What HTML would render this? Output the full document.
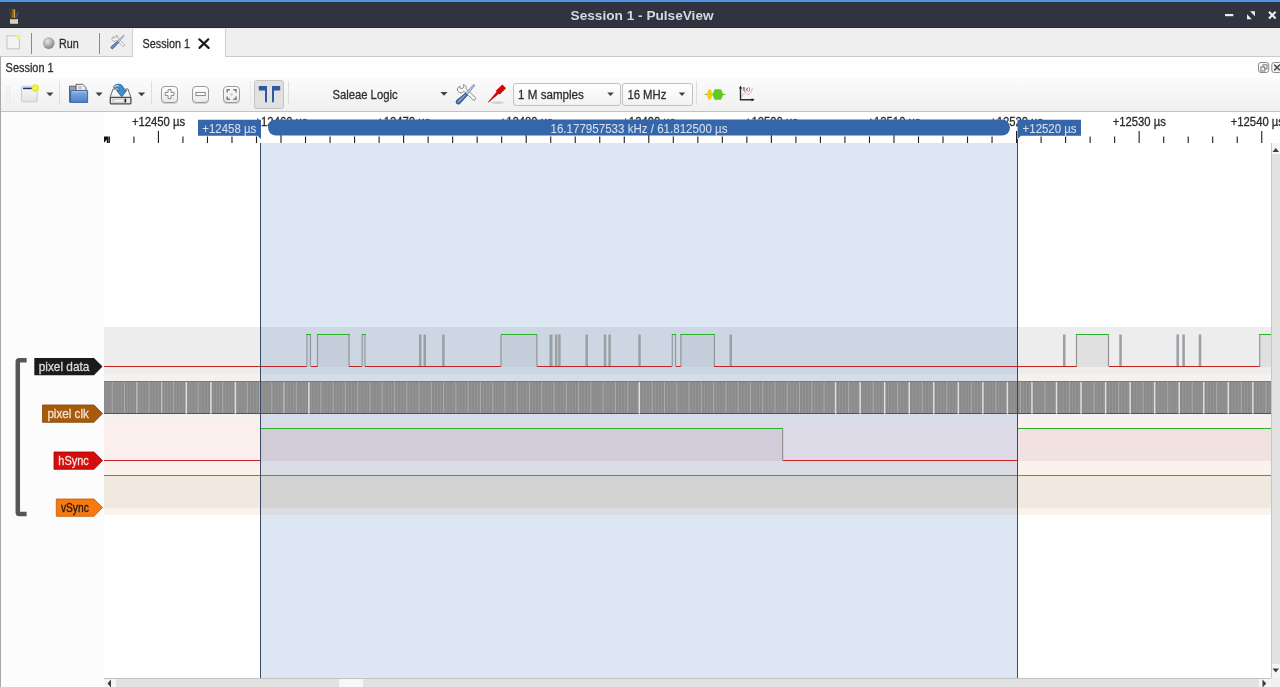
<!DOCTYPE html>
<html><head><meta charset="utf-8"><title>Session 1 - PulseView</title>
<style>
html,body{margin:0;padding:0;}
body{width:1280px;height:687px;overflow:hidden;background:#fff;position:relative;font-family:"Liberation Sans","DejaVu Sans",sans-serif;font-size:12.5px;color:#2e2e2e;}
.abs{position:absolute;}
#topline{left:0;top:0;width:1280px;height:2px;background:#4f93e3;}
#titlebar{left:0;top:2px;width:1280px;height:26px;background:#2f343f;border-bottom:1px solid #262a33;box-sizing:border-box;}
#maintb{left:0;top:28px;width:1280px;height:29px;background:#efefef;border-bottom:1px solid #c9c9c9;box-sizing:border-box;}
#tab{left:132px;top:28px;width:94px;height:30px;background:#fefefe;border:1px solid #cfcfcf;border-top-color:#ececec;border-bottom:none;box-sizing:border-box;border-radius:2px 2px 0 0;}
#dock{left:0;top:57px;width:1280px;height:21px;background:#fefefe;}
#toolbar{left:0;top:78px;width:1280px;height:34px;background:linear-gradient(#fbfbfb,#f0f0f0);border-bottom:1px solid #c2c2c2;box-sizing:border-box;}
#leftedge{left:0;top:57px;width:1px;height:630px;background:#a9a9a9;}
#hdr{left:1px;top:112px;width:103px;height:575px;background:#fcfcfc;}
.sep{position:absolute;width:1px;background:#dedede;}
.combo{position:absolute;box-sizing:border-box;border:1px solid #c2c2c2;border-radius:3px;background:linear-gradient(#ffffff,#f2f2f2);}
.zbtn{position:absolute;box-sizing:border-box;border:1px solid #9a9a9a;border-radius:4px;background:linear-gradient(#ffffff,#e9e9e9);box-shadow:0 1px 0 #d0d0d0;}
svg{position:absolute;left:0;top:0;overflow:visible;}
svg text{font-family:"Liberation Sans","DejaVu Sans",sans-serif;white-space:pre;}
svg{will-change:transform;}
</style></head><body>
<div class="abs" id="topline"></div>
<div class="abs" id="titlebar"></div>
<div class="abs" id="maintb"></div>
<div class="abs" id="tab"></div>
<div class="abs" id="dock"></div>
<div class="abs" id="toolbar"></div>
<div class="abs" id="hdr"></div>

<div class="combo" style="left:513px;top:83px;width:108px;height:23px;"></div>
<div class="combo" style="left:622px;top:83px;width:71px;height:23px;"></div>
<div class="sep" style="left:31px;top:33px;height:21px;background:#8a8a8a;"></div>
<div class="sep" style="left:99px;top:33px;height:21px;background:#8a8a8a;"></div>
<div class="sep" style="left:59px;top:81px;height:24px;"></div>
<div class="sep" style="left:151px;top:81px;height:24px;"></div>
<div class="sep" style="left:250px;top:81px;height:24px;background:#e8e8e8;"></div>
<div class="sep" style="left:288px;top:81px;height:24px;"></div>
<div class="sep" style="left:696px;top:81px;height:24px;"></div>

<div class="abs" style="left:254px;top:80px;width:30px;height:29px;box-sizing:border-box;border:1px solid #c4c4c4;border-radius:3px;background:#e1e1e1;"></div>
<div class="zbtn" style="left:161px;top:86px;width:17px;height:17px;"></div>
<div class="zbtn" style="left:192px;top:86px;width:17px;height:17px;"></div>
<div class="zbtn" style="left:223px;top:86px;width:17px;height:17px;"></div>

<svg width="1280" height="687" viewBox="0 0 1280 687">
<g shape-rendering="crispEdges">
<rect x="260.00" y="143.00" width="758.00" height="535.00" fill="#dce7f3" />
<rect x="104.00" y="327.00" width="156.00" height="47.00" fill="#ededed" />
<rect x="260.00" y="327.00" width="758.00" height="47.00" fill="#ccd7e3" />
<rect x="1018.00" y="327.00" width="253.00" height="47.00" fill="#ededed" />
<rect x="104.00" y="374.00" width="156.00" height="47.00" fill="#f5f1ee" />
<rect x="260.00" y="374.00" width="758.00" height="47.00" fill="#d5dde8" />
<rect x="1018.00" y="374.00" width="253.00" height="47.00" fill="#f5f1ee" />
<rect x="104.00" y="421.00" width="156.00" height="47.00" fill="#fcf0ee" />
<rect x="260.00" y="421.00" width="758.00" height="47.00" fill="#dddae7" />
<rect x="1018.00" y="421.00" width="253.00" height="47.00" fill="#fcf0ee" />
<rect x="104.00" y="468.00" width="156.00" height="47.00" fill="#faf3ec" />
<rect x="260.00" y="468.00" width="758.00" height="47.00" fill="#dadee3" />
<rect x="1018.00" y="468.00" width="253.00" height="47.00" fill="#faf3ec" />
<line x1="104.00" y1="366.50" x2="306.90" y2="366.50" stroke="#c22323" stroke-width="1"/>
<rect x="306.90" y="334.50" width="3.60" height="32.00" fill="#c5cfdb" />
<rect x="306.30" y="334.50" width="1.20" height="32.00" fill="#979ba1" shape-rendering="auto"/>
<rect x="309.90" y="334.50" width="1.20" height="32.00" fill="#979ba1" shape-rendering="auto"/>
<line x1="306.40" y1="334.50" x2="311.00" y2="334.50" stroke="#2bb02b" stroke-width="1"/>
<line x1="310.50" y1="366.50" x2="317.50" y2="366.50" stroke="#c22323" stroke-width="1"/>
<rect x="317.50" y="334.50" width="31.50" height="32.00" fill="#c5cfdb" />
<rect x="316.90" y="334.50" width="1.20" height="32.00" fill="#949494" shape-rendering="auto"/>
<rect x="348.40" y="334.50" width="1.20" height="32.00" fill="#949494" shape-rendering="auto"/>
<line x1="317.00" y1="334.50" x2="349.50" y2="334.50" stroke="#2bb02b" stroke-width="1"/>
<line x1="349.00" y1="366.50" x2="362.10" y2="366.50" stroke="#c22323" stroke-width="1"/>
<rect x="362.10" y="334.50" width="2.90" height="32.00" fill="#c5cfdb" />
<rect x="361.50" y="334.50" width="1.20" height="32.00" fill="#979ba1" shape-rendering="auto"/>
<rect x="364.40" y="334.50" width="1.20" height="32.00" fill="#979ba1" shape-rendering="auto"/>
<line x1="361.60" y1="334.50" x2="365.50" y2="334.50" stroke="#2bb02b" stroke-width="1"/>
<line x1="365.00" y1="366.50" x2="418.95" y2="366.50" stroke="#c22323" stroke-width="1"/>
<rect x="418.95" y="334.50" width="2.50" height="32.00" fill="#9b9fa4" shape-rendering="auto"/>
<line x1="418.95" y1="366.50" x2="423.50" y2="366.50" stroke="#c22323" stroke-width="1"/>
<rect x="423.50" y="334.50" width="2.50" height="32.00" fill="#9b9fa4" shape-rendering="auto"/>
<line x1="423.50" y1="366.50" x2="442.15" y2="366.50" stroke="#c22323" stroke-width="1"/>
<rect x="442.15" y="334.50" width="2.50" height="32.00" fill="#9b9fa4" shape-rendering="auto"/>
<line x1="442.15" y1="366.50" x2="501.00" y2="366.50" stroke="#c22323" stroke-width="1"/>
<rect x="501.00" y="334.50" width="35.90" height="32.00" fill="#c5cfdb" />
<rect x="500.40" y="334.50" width="1.20" height="32.00" fill="#949494" shape-rendering="auto"/>
<rect x="536.30" y="334.50" width="1.20" height="32.00" fill="#949494" shape-rendering="auto"/>
<line x1="500.50" y1="334.50" x2="537.40" y2="334.50" stroke="#2bb02b" stroke-width="1"/>
<line x1="536.90" y1="366.50" x2="549.45" y2="366.50" stroke="#c22323" stroke-width="1"/>
<rect x="549.45" y="334.50" width="3.10" height="32.00" fill="#9b9fa4" shape-rendering="auto"/>
<line x1="549.45" y1="366.50" x2="554.95" y2="366.50" stroke="#c22323" stroke-width="1"/>
<rect x="554.95" y="334.50" width="2.50" height="32.00" fill="#9b9fa4" shape-rendering="auto"/>
<line x1="554.95" y1="366.50" x2="558.15" y2="366.50" stroke="#c22323" stroke-width="1"/>
<rect x="558.15" y="334.50" width="2.50" height="32.00" fill="#9b9fa4" shape-rendering="auto"/>
<line x1="558.15" y1="366.50" x2="585.45" y2="366.50" stroke="#c22323" stroke-width="1"/>
<rect x="585.45" y="334.50" width="2.50" height="32.00" fill="#9b9fa4" shape-rendering="auto"/>
<line x1="585.45" y1="366.50" x2="603.75" y2="366.50" stroke="#c22323" stroke-width="1"/>
<rect x="603.75" y="334.50" width="2.50" height="32.00" fill="#9b9fa4" shape-rendering="auto"/>
<line x1="603.75" y1="366.50" x2="608.35" y2="366.50" stroke="#c22323" stroke-width="1"/>
<rect x="608.35" y="334.50" width="2.50" height="32.00" fill="#9b9fa4" shape-rendering="auto"/>
<line x1="608.35" y1="366.50" x2="638.25" y2="366.50" stroke="#c22323" stroke-width="1"/>
<rect x="638.25" y="334.50" width="2.50" height="32.00" fill="#9b9fa4" shape-rendering="auto"/>
<line x1="638.25" y1="366.50" x2="672.25" y2="366.50" stroke="#c22323" stroke-width="1"/>
<rect x="672.25" y="334.50" width="3.35" height="32.00" fill="#c5cfdb" />
<rect x="671.65" y="334.50" width="1.20" height="32.00" fill="#979ba1" shape-rendering="auto"/>
<rect x="675.00" y="334.50" width="1.20" height="32.00" fill="#979ba1" shape-rendering="auto"/>
<line x1="671.75" y1="334.50" x2="676.10" y2="334.50" stroke="#2bb02b" stroke-width="1"/>
<line x1="675.60" y1="366.50" x2="680.90" y2="366.50" stroke="#c22323" stroke-width="1"/>
<rect x="680.90" y="334.50" width="33.50" height="32.00" fill="#c5cfdb" />
<rect x="680.30" y="334.50" width="1.20" height="32.00" fill="#949494" shape-rendering="auto"/>
<rect x="713.80" y="334.50" width="1.20" height="32.00" fill="#949494" shape-rendering="auto"/>
<line x1="680.40" y1="334.50" x2="714.90" y2="334.50" stroke="#2bb02b" stroke-width="1"/>
<line x1="714.40" y1="366.50" x2="729.50" y2="366.50" stroke="#c22323" stroke-width="1"/>
<rect x="729.50" y="334.50" width="2.50" height="32.00" fill="#9b9fa4" shape-rendering="auto"/>
<line x1="729.50" y1="366.50" x2="1063.00" y2="366.50" stroke="#c22323" stroke-width="1"/>
<rect x="1063.00" y="334.50" width="2.50" height="32.00" fill="#9b9fa4" shape-rendering="auto"/>
<line x1="1063.00" y1="366.50" x2="1076.50" y2="366.50" stroke="#c22323" stroke-width="1"/>
<rect x="1076.50" y="334.50" width="32.00" height="32.00" fill="#e0e0e0" />
<rect x="1075.90" y="334.50" width="1.20" height="32.00" fill="#949494" shape-rendering="auto"/>
<rect x="1107.90" y="334.50" width="1.20" height="32.00" fill="#949494" shape-rendering="auto"/>
<line x1="1076.00" y1="334.50" x2="1109.00" y2="334.50" stroke="#2bb02b" stroke-width="1"/>
<line x1="1108.50" y1="366.50" x2="1119.25" y2="366.50" stroke="#c22323" stroke-width="1"/>
<rect x="1119.25" y="334.50" width="2.50" height="32.00" fill="#9b9fa4" shape-rendering="auto"/>
<line x1="1119.25" y1="366.50" x2="1176.45" y2="366.50" stroke="#c22323" stroke-width="1"/>
<rect x="1176.45" y="334.50" width="2.50" height="32.00" fill="#9b9fa4" shape-rendering="auto"/>
<line x1="1176.45" y1="366.50" x2="1182.35" y2="366.50" stroke="#c22323" stroke-width="1"/>
<rect x="1182.35" y="334.50" width="2.50" height="32.00" fill="#9b9fa4" shape-rendering="auto"/>
<line x1="1182.35" y1="366.50" x2="1198.75" y2="366.50" stroke="#c22323" stroke-width="1"/>
<rect x="1198.75" y="334.50" width="2.50" height="32.00" fill="#9b9fa4" shape-rendering="auto"/>
<line x1="1198.75" y1="366.50" x2="1259.70" y2="366.50" stroke="#c22323" stroke-width="1"/>
<rect x="1259.70" y="334.50" width="11.30" height="32.00" fill="#e0e0e0" />
<rect x="1259.10" y="334.50" width="1.20" height="32.00" fill="#949494" shape-rendering="auto"/>
<line x1="1259.20" y1="334.50" x2="1271.50" y2="334.50" stroke="#2bb02b" stroke-width="1"/>
<rect x="104.00" y="381.50" width="1167.00" height="32.00" fill="#8b8b8b" />
<rect x="105.71" y="382.00" width="0.80" height="32.00" fill="#989898" shape-rendering="auto"/>
<rect x="108.78" y="382.00" width="0.80" height="32.00" fill="#989898" shape-rendering="auto"/>
<rect x="114.92" y="382.00" width="0.80" height="32.00" fill="#989898" shape-rendering="auto"/>
<rect x="117.99" y="382.00" width="0.80" height="32.00" fill="#989898" shape-rendering="auto"/>
<rect x="121.05" y="382.00" width="0.80" height="32.00" fill="#989898" shape-rendering="auto"/>
<rect x="111.70" y="382.00" width="1.10" height="32.00" fill="#ababab" shape-rendering="auto"/>
<rect x="127.19" y="382.00" width="0.80" height="32.00" fill="#989898" shape-rendering="auto"/>
<rect x="130.26" y="382.00" width="0.80" height="32.00" fill="#989898" shape-rendering="auto"/>
<rect x="133.33" y="382.00" width="0.80" height="32.00" fill="#989898" shape-rendering="auto"/>
<rect x="123.97" y="382.00" width="1.10" height="32.00" fill="#ababab" shape-rendering="auto"/>
<rect x="139.46" y="382.00" width="0.80" height="32.00" fill="#989898" shape-rendering="auto"/>
<rect x="142.53" y="382.00" width="0.80" height="32.00" fill="#989898" shape-rendering="auto"/>
<rect x="145.60" y="382.00" width="0.80" height="32.00" fill="#989898" shape-rendering="auto"/>
<rect x="151.74" y="382.00" width="0.80" height="32.00" fill="#989898" shape-rendering="auto"/>
<rect x="154.80" y="382.00" width="0.80" height="32.00" fill="#989898" shape-rendering="auto"/>
<rect x="157.87" y="382.00" width="0.80" height="32.00" fill="#989898" shape-rendering="auto"/>
<rect x="148.52" y="382.00" width="1.10" height="32.00" fill="#ababab" shape-rendering="auto"/>
<rect x="164.01" y="382.00" width="0.80" height="32.00" fill="#989898" shape-rendering="auto"/>
<rect x="167.08" y="382.00" width="0.80" height="32.00" fill="#989898" shape-rendering="auto"/>
<rect x="170.14" y="382.00" width="0.80" height="32.00" fill="#989898" shape-rendering="auto"/>
<rect x="176.28" y="382.00" width="0.80" height="32.00" fill="#989898" shape-rendering="auto"/>
<rect x="179.35" y="382.00" width="0.80" height="32.00" fill="#989898" shape-rendering="auto"/>
<rect x="182.42" y="382.00" width="0.80" height="32.00" fill="#989898" shape-rendering="auto"/>
<rect x="173.06" y="382.00" width="1.10" height="32.00" fill="#ababab" shape-rendering="auto"/>
<rect x="188.55" y="382.00" width="0.80" height="32.00" fill="#989898" shape-rendering="auto"/>
<rect x="191.62" y="382.00" width="0.80" height="32.00" fill="#989898" shape-rendering="auto"/>
<rect x="194.69" y="382.00" width="0.80" height="32.00" fill="#989898" shape-rendering="auto"/>
<rect x="200.83" y="382.00" width="0.80" height="32.00" fill="#989898" shape-rendering="auto"/>
<rect x="203.89" y="382.00" width="0.80" height="32.00" fill="#989898" shape-rendering="auto"/>
<rect x="206.96" y="382.00" width="0.80" height="32.00" fill="#989898" shape-rendering="auto"/>
<rect x="197.61" y="382.00" width="1.10" height="32.00" fill="#ababab" shape-rendering="auto"/>
<rect x="213.10" y="382.00" width="0.80" height="32.00" fill="#989898" shape-rendering="auto"/>
<rect x="216.17" y="382.00" width="0.80" height="32.00" fill="#989898" shape-rendering="auto"/>
<rect x="219.23" y="382.00" width="0.80" height="32.00" fill="#989898" shape-rendering="auto"/>
<rect x="225.37" y="382.00" width="0.80" height="32.00" fill="#989898" shape-rendering="auto"/>
<rect x="228.44" y="382.00" width="0.80" height="32.00" fill="#989898" shape-rendering="auto"/>
<rect x="231.51" y="382.00" width="0.80" height="32.00" fill="#989898" shape-rendering="auto"/>
<rect x="222.15" y="382.00" width="1.10" height="32.00" fill="#ababab" shape-rendering="auto"/>
<rect x="237.64" y="382.00" width="0.80" height="32.00" fill="#989898" shape-rendering="auto"/>
<rect x="240.71" y="382.00" width="0.80" height="32.00" fill="#989898" shape-rendering="auto"/>
<rect x="243.78" y="382.00" width="0.80" height="32.00" fill="#989898" shape-rendering="auto"/>
<rect x="249.92" y="382.00" width="0.80" height="32.00" fill="#989898" shape-rendering="auto"/>
<rect x="252.98" y="382.00" width="0.80" height="32.00" fill="#989898" shape-rendering="auto"/>
<rect x="256.05" y="382.00" width="0.80" height="32.00" fill="#989898" shape-rendering="auto"/>
<rect x="246.70" y="382.00" width="1.10" height="32.00" fill="#ababab" shape-rendering="auto"/>
<rect x="262.19" y="382.00" width="0.80" height="32.00" fill="#989898" shape-rendering="auto"/>
<rect x="265.26" y="382.00" width="0.80" height="32.00" fill="#989898" shape-rendering="auto"/>
<rect x="268.32" y="382.00" width="0.80" height="32.00" fill="#989898" shape-rendering="auto"/>
<rect x="258.97" y="382.00" width="1.10" height="32.00" fill="#ababab" shape-rendering="auto"/>
<rect x="274.46" y="382.00" width="0.80" height="32.00" fill="#989898" shape-rendering="auto"/>
<rect x="277.53" y="382.00" width="0.80" height="32.00" fill="#989898" shape-rendering="auto"/>
<rect x="280.60" y="382.00" width="0.80" height="32.00" fill="#989898" shape-rendering="auto"/>
<rect x="271.24" y="382.00" width="1.10" height="32.00" fill="#ababab" shape-rendering="auto"/>
<rect x="286.73" y="382.00" width="0.80" height="32.00" fill="#989898" shape-rendering="auto"/>
<rect x="289.80" y="382.00" width="0.80" height="32.00" fill="#989898" shape-rendering="auto"/>
<rect x="292.87" y="382.00" width="0.80" height="32.00" fill="#989898" shape-rendering="auto"/>
<rect x="299.01" y="382.00" width="0.80" height="32.00" fill="#989898" shape-rendering="auto"/>
<rect x="302.07" y="382.00" width="0.80" height="32.00" fill="#989898" shape-rendering="auto"/>
<rect x="305.14" y="382.00" width="0.80" height="32.00" fill="#989898" shape-rendering="auto"/>
<rect x="295.79" y="382.00" width="1.10" height="32.00" fill="#ababab" shape-rendering="auto"/>
<rect x="311.28" y="382.00" width="0.80" height="32.00" fill="#989898" shape-rendering="auto"/>
<rect x="314.35" y="382.00" width="0.80" height="32.00" fill="#989898" shape-rendering="auto"/>
<rect x="317.41" y="382.00" width="0.80" height="32.00" fill="#989898" shape-rendering="auto"/>
<rect x="323.55" y="382.00" width="0.80" height="32.00" fill="#989898" shape-rendering="auto"/>
<rect x="326.62" y="382.00" width="0.80" height="32.00" fill="#989898" shape-rendering="auto"/>
<rect x="329.69" y="382.00" width="0.80" height="32.00" fill="#989898" shape-rendering="auto"/>
<rect x="320.33" y="382.00" width="1.10" height="32.00" fill="#ababab" shape-rendering="auto"/>
<rect x="335.82" y="382.00" width="0.80" height="32.00" fill="#989898" shape-rendering="auto"/>
<rect x="338.89" y="382.00" width="0.80" height="32.00" fill="#989898" shape-rendering="auto"/>
<rect x="341.96" y="382.00" width="0.80" height="32.00" fill="#989898" shape-rendering="auto"/>
<rect x="332.60" y="382.00" width="1.10" height="32.00" fill="#ababab" shape-rendering="auto"/>
<rect x="348.10" y="382.00" width="0.80" height="32.00" fill="#989898" shape-rendering="auto"/>
<rect x="351.16" y="382.00" width="0.80" height="32.00" fill="#989898" shape-rendering="auto"/>
<rect x="354.23" y="382.00" width="0.80" height="32.00" fill="#989898" shape-rendering="auto"/>
<rect x="344.88" y="382.00" width="1.10" height="32.00" fill="#ababab" shape-rendering="auto"/>
<rect x="360.37" y="382.00" width="0.80" height="32.00" fill="#989898" shape-rendering="auto"/>
<rect x="363.44" y="382.00" width="0.80" height="32.00" fill="#989898" shape-rendering="auto"/>
<rect x="366.50" y="382.00" width="0.80" height="32.00" fill="#989898" shape-rendering="auto"/>
<rect x="357.15" y="382.00" width="1.10" height="32.00" fill="#ababab" shape-rendering="auto"/>
<rect x="372.64" y="382.00" width="0.80" height="32.00" fill="#989898" shape-rendering="auto"/>
<rect x="375.71" y="382.00" width="0.80" height="32.00" fill="#989898" shape-rendering="auto"/>
<rect x="378.78" y="382.00" width="0.80" height="32.00" fill="#989898" shape-rendering="auto"/>
<rect x="369.42" y="382.00" width="1.10" height="32.00" fill="#ababab" shape-rendering="auto"/>
<rect x="384.91" y="382.00" width="0.80" height="32.00" fill="#989898" shape-rendering="auto"/>
<rect x="387.98" y="382.00" width="0.80" height="32.00" fill="#989898" shape-rendering="auto"/>
<rect x="391.05" y="382.00" width="0.80" height="32.00" fill="#989898" shape-rendering="auto"/>
<rect x="381.69" y="382.00" width="1.10" height="32.00" fill="#ababab" shape-rendering="auto"/>
<rect x="397.19" y="382.00" width="0.80" height="32.00" fill="#989898" shape-rendering="auto"/>
<rect x="400.25" y="382.00" width="0.80" height="32.00" fill="#989898" shape-rendering="auto"/>
<rect x="403.32" y="382.00" width="0.80" height="32.00" fill="#989898" shape-rendering="auto"/>
<rect x="393.97" y="382.00" width="1.10" height="32.00" fill="#ababab" shape-rendering="auto"/>
<rect x="409.46" y="382.00" width="0.80" height="32.00" fill="#989898" shape-rendering="auto"/>
<rect x="412.53" y="382.00" width="0.80" height="32.00" fill="#989898" shape-rendering="auto"/>
<rect x="415.59" y="382.00" width="0.80" height="32.00" fill="#989898" shape-rendering="auto"/>
<rect x="406.24" y="382.00" width="1.10" height="32.00" fill="#ababab" shape-rendering="auto"/>
<rect x="421.73" y="382.00" width="0.80" height="32.00" fill="#989898" shape-rendering="auto"/>
<rect x="424.80" y="382.00" width="0.80" height="32.00" fill="#989898" shape-rendering="auto"/>
<rect x="427.87" y="382.00" width="0.80" height="32.00" fill="#989898" shape-rendering="auto"/>
<rect x="418.51" y="382.00" width="1.10" height="32.00" fill="#ababab" shape-rendering="auto"/>
<rect x="434.00" y="382.00" width="0.80" height="32.00" fill="#989898" shape-rendering="auto"/>
<rect x="437.07" y="382.00" width="0.80" height="32.00" fill="#989898" shape-rendering="auto"/>
<rect x="440.14" y="382.00" width="0.80" height="32.00" fill="#989898" shape-rendering="auto"/>
<rect x="430.78" y="382.00" width="1.10" height="32.00" fill="#ababab" shape-rendering="auto"/>
<rect x="446.28" y="382.00" width="0.80" height="32.00" fill="#989898" shape-rendering="auto"/>
<rect x="449.34" y="382.00" width="0.80" height="32.00" fill="#989898" shape-rendering="auto"/>
<rect x="452.41" y="382.00" width="0.80" height="32.00" fill="#989898" shape-rendering="auto"/>
<rect x="443.06" y="382.00" width="1.10" height="32.00" fill="#ababab" shape-rendering="auto"/>
<rect x="458.55" y="382.00" width="0.80" height="32.00" fill="#989898" shape-rendering="auto"/>
<rect x="461.62" y="382.00" width="0.80" height="32.00" fill="#989898" shape-rendering="auto"/>
<rect x="464.68" y="382.00" width="0.80" height="32.00" fill="#989898" shape-rendering="auto"/>
<rect x="455.33" y="382.00" width="1.10" height="32.00" fill="#ababab" shape-rendering="auto"/>
<rect x="470.82" y="382.00" width="0.80" height="32.00" fill="#989898" shape-rendering="auto"/>
<rect x="473.89" y="382.00" width="0.80" height="32.00" fill="#989898" shape-rendering="auto"/>
<rect x="476.96" y="382.00" width="0.80" height="32.00" fill="#989898" shape-rendering="auto"/>
<rect x="467.60" y="382.00" width="1.10" height="32.00" fill="#ababab" shape-rendering="auto"/>
<rect x="483.09" y="382.00" width="0.80" height="32.00" fill="#989898" shape-rendering="auto"/>
<rect x="486.16" y="382.00" width="0.80" height="32.00" fill="#989898" shape-rendering="auto"/>
<rect x="489.23" y="382.00" width="0.80" height="32.00" fill="#989898" shape-rendering="auto"/>
<rect x="479.87" y="382.00" width="1.10" height="32.00" fill="#ababab" shape-rendering="auto"/>
<rect x="495.37" y="382.00" width="0.80" height="32.00" fill="#989898" shape-rendering="auto"/>
<rect x="498.43" y="382.00" width="0.80" height="32.00" fill="#989898" shape-rendering="auto"/>
<rect x="501.50" y="382.00" width="0.80" height="32.00" fill="#989898" shape-rendering="auto"/>
<rect x="492.15" y="382.00" width="1.10" height="32.00" fill="#ababab" shape-rendering="auto"/>
<rect x="507.64" y="382.00" width="0.80" height="32.00" fill="#989898" shape-rendering="auto"/>
<rect x="510.71" y="382.00" width="0.80" height="32.00" fill="#989898" shape-rendering="auto"/>
<rect x="513.77" y="382.00" width="0.80" height="32.00" fill="#989898" shape-rendering="auto"/>
<rect x="504.42" y="382.00" width="1.10" height="32.00" fill="#ababab" shape-rendering="auto"/>
<rect x="519.91" y="382.00" width="0.80" height="32.00" fill="#989898" shape-rendering="auto"/>
<rect x="522.98" y="382.00" width="0.80" height="32.00" fill="#989898" shape-rendering="auto"/>
<rect x="526.05" y="382.00" width="0.80" height="32.00" fill="#989898" shape-rendering="auto"/>
<rect x="516.69" y="382.00" width="1.10" height="32.00" fill="#ababab" shape-rendering="auto"/>
<rect x="532.18" y="382.00" width="0.80" height="32.00" fill="#989898" shape-rendering="auto"/>
<rect x="535.25" y="382.00" width="0.80" height="32.00" fill="#989898" shape-rendering="auto"/>
<rect x="538.32" y="382.00" width="0.80" height="32.00" fill="#989898" shape-rendering="auto"/>
<rect x="528.96" y="382.00" width="1.10" height="32.00" fill="#ababab" shape-rendering="auto"/>
<rect x="544.46" y="382.00" width="0.80" height="32.00" fill="#989898" shape-rendering="auto"/>
<rect x="547.52" y="382.00" width="0.80" height="32.00" fill="#989898" shape-rendering="auto"/>
<rect x="550.59" y="382.00" width="0.80" height="32.00" fill="#989898" shape-rendering="auto"/>
<rect x="541.24" y="382.00" width="1.10" height="32.00" fill="#ababab" shape-rendering="auto"/>
<rect x="556.73" y="382.00" width="0.80" height="32.00" fill="#989898" shape-rendering="auto"/>
<rect x="559.80" y="382.00" width="0.80" height="32.00" fill="#989898" shape-rendering="auto"/>
<rect x="562.86" y="382.00" width="0.80" height="32.00" fill="#989898" shape-rendering="auto"/>
<rect x="553.51" y="382.00" width="1.10" height="32.00" fill="#ababab" shape-rendering="auto"/>
<rect x="569.00" y="382.00" width="0.80" height="32.00" fill="#989898" shape-rendering="auto"/>
<rect x="572.07" y="382.00" width="0.80" height="32.00" fill="#989898" shape-rendering="auto"/>
<rect x="575.14" y="382.00" width="0.80" height="32.00" fill="#989898" shape-rendering="auto"/>
<rect x="565.78" y="382.00" width="1.10" height="32.00" fill="#ababab" shape-rendering="auto"/>
<rect x="581.27" y="382.00" width="0.80" height="32.00" fill="#989898" shape-rendering="auto"/>
<rect x="584.34" y="382.00" width="0.80" height="32.00" fill="#989898" shape-rendering="auto"/>
<rect x="587.41" y="382.00" width="0.80" height="32.00" fill="#989898" shape-rendering="auto"/>
<rect x="578.05" y="382.00" width="1.10" height="32.00" fill="#ababab" shape-rendering="auto"/>
<rect x="593.55" y="382.00" width="0.80" height="32.00" fill="#989898" shape-rendering="auto"/>
<rect x="596.61" y="382.00" width="0.80" height="32.00" fill="#989898" shape-rendering="auto"/>
<rect x="599.68" y="382.00" width="0.80" height="32.00" fill="#989898" shape-rendering="auto"/>
<rect x="590.33" y="382.00" width="1.10" height="32.00" fill="#ababab" shape-rendering="auto"/>
<rect x="605.82" y="382.00" width="0.80" height="32.00" fill="#989898" shape-rendering="auto"/>
<rect x="608.89" y="382.00" width="0.80" height="32.00" fill="#989898" shape-rendering="auto"/>
<rect x="611.95" y="382.00" width="0.80" height="32.00" fill="#989898" shape-rendering="auto"/>
<rect x="602.60" y="382.00" width="1.10" height="32.00" fill="#ababab" shape-rendering="auto"/>
<rect x="618.09" y="382.00" width="0.80" height="32.00" fill="#989898" shape-rendering="auto"/>
<rect x="621.16" y="382.00" width="0.80" height="32.00" fill="#989898" shape-rendering="auto"/>
<rect x="624.23" y="382.00" width="0.80" height="32.00" fill="#989898" shape-rendering="auto"/>
<rect x="614.87" y="382.00" width="1.10" height="32.00" fill="#ababab" shape-rendering="auto"/>
<rect x="630.36" y="382.00" width="0.80" height="32.00" fill="#989898" shape-rendering="auto"/>
<rect x="633.43" y="382.00" width="0.80" height="32.00" fill="#989898" shape-rendering="auto"/>
<rect x="636.50" y="382.00" width="0.80" height="32.00" fill="#989898" shape-rendering="auto"/>
<rect x="627.15" y="382.00" width="1.10" height="32.00" fill="#ababab" shape-rendering="auto"/>
<rect x="642.64" y="382.00" width="0.80" height="32.00" fill="#989898" shape-rendering="auto"/>
<rect x="645.70" y="382.00" width="0.80" height="32.00" fill="#989898" shape-rendering="auto"/>
<rect x="648.77" y="382.00" width="0.80" height="32.00" fill="#989898" shape-rendering="auto"/>
<rect x="654.91" y="382.00" width="0.80" height="32.00" fill="#989898" shape-rendering="auto"/>
<rect x="657.98" y="382.00" width="0.80" height="32.00" fill="#989898" shape-rendering="auto"/>
<rect x="661.04" y="382.00" width="0.80" height="32.00" fill="#989898" shape-rendering="auto"/>
<rect x="651.69" y="382.00" width="1.10" height="32.00" fill="#ababab" shape-rendering="auto"/>
<rect x="667.18" y="382.00" width="0.80" height="32.00" fill="#989898" shape-rendering="auto"/>
<rect x="670.25" y="382.00" width="0.80" height="32.00" fill="#989898" shape-rendering="auto"/>
<rect x="673.32" y="382.00" width="0.80" height="32.00" fill="#989898" shape-rendering="auto"/>
<rect x="663.96" y="382.00" width="1.10" height="32.00" fill="#ababab" shape-rendering="auto"/>
<rect x="679.45" y="382.00" width="0.80" height="32.00" fill="#989898" shape-rendering="auto"/>
<rect x="682.52" y="382.00" width="0.80" height="32.00" fill="#989898" shape-rendering="auto"/>
<rect x="685.59" y="382.00" width="0.80" height="32.00" fill="#989898" shape-rendering="auto"/>
<rect x="676.24" y="382.00" width="1.10" height="32.00" fill="#ababab" shape-rendering="auto"/>
<rect x="691.73" y="382.00" width="0.80" height="32.00" fill="#989898" shape-rendering="auto"/>
<rect x="694.79" y="382.00" width="0.80" height="32.00" fill="#989898" shape-rendering="auto"/>
<rect x="697.86" y="382.00" width="0.80" height="32.00" fill="#989898" shape-rendering="auto"/>
<rect x="688.51" y="382.00" width="1.10" height="32.00" fill="#ababab" shape-rendering="auto"/>
<rect x="704.00" y="382.00" width="0.80" height="32.00" fill="#989898" shape-rendering="auto"/>
<rect x="707.07" y="382.00" width="0.80" height="32.00" fill="#989898" shape-rendering="auto"/>
<rect x="710.13" y="382.00" width="0.80" height="32.00" fill="#989898" shape-rendering="auto"/>
<rect x="700.78" y="382.00" width="1.10" height="32.00" fill="#ababab" shape-rendering="auto"/>
<rect x="716.27" y="382.00" width="0.80" height="32.00" fill="#989898" shape-rendering="auto"/>
<rect x="719.34" y="382.00" width="0.80" height="32.00" fill="#989898" shape-rendering="auto"/>
<rect x="722.41" y="382.00" width="0.80" height="32.00" fill="#989898" shape-rendering="auto"/>
<rect x="713.05" y="382.00" width="1.10" height="32.00" fill="#ababab" shape-rendering="auto"/>
<rect x="728.54" y="382.00" width="0.80" height="32.00" fill="#989898" shape-rendering="auto"/>
<rect x="731.61" y="382.00" width="0.80" height="32.00" fill="#989898" shape-rendering="auto"/>
<rect x="734.68" y="382.00" width="0.80" height="32.00" fill="#989898" shape-rendering="auto"/>
<rect x="725.33" y="382.00" width="1.10" height="32.00" fill="#ababab" shape-rendering="auto"/>
<rect x="740.82" y="382.00" width="0.80" height="32.00" fill="#989898" shape-rendering="auto"/>
<rect x="743.88" y="382.00" width="0.80" height="32.00" fill="#989898" shape-rendering="auto"/>
<rect x="746.95" y="382.00" width="0.80" height="32.00" fill="#989898" shape-rendering="auto"/>
<rect x="737.60" y="382.00" width="1.10" height="32.00" fill="#ababab" shape-rendering="auto"/>
<rect x="753.09" y="382.00" width="0.80" height="32.00" fill="#989898" shape-rendering="auto"/>
<rect x="756.16" y="382.00" width="0.80" height="32.00" fill="#989898" shape-rendering="auto"/>
<rect x="759.22" y="382.00" width="0.80" height="32.00" fill="#989898" shape-rendering="auto"/>
<rect x="749.87" y="382.00" width="1.10" height="32.00" fill="#ababab" shape-rendering="auto"/>
<rect x="765.36" y="382.00" width="0.80" height="32.00" fill="#989898" shape-rendering="auto"/>
<rect x="768.43" y="382.00" width="0.80" height="32.00" fill="#989898" shape-rendering="auto"/>
<rect x="771.50" y="382.00" width="0.80" height="32.00" fill="#989898" shape-rendering="auto"/>
<rect x="762.14" y="382.00" width="1.10" height="32.00" fill="#ababab" shape-rendering="auto"/>
<rect x="777.63" y="382.00" width="0.80" height="32.00" fill="#989898" shape-rendering="auto"/>
<rect x="780.70" y="382.00" width="0.80" height="32.00" fill="#989898" shape-rendering="auto"/>
<rect x="783.77" y="382.00" width="0.80" height="32.00" fill="#989898" shape-rendering="auto"/>
<rect x="774.42" y="382.00" width="1.10" height="32.00" fill="#ababab" shape-rendering="auto"/>
<rect x="789.91" y="382.00" width="0.80" height="32.00" fill="#989898" shape-rendering="auto"/>
<rect x="792.97" y="382.00" width="0.80" height="32.00" fill="#989898" shape-rendering="auto"/>
<rect x="796.04" y="382.00" width="0.80" height="32.00" fill="#989898" shape-rendering="auto"/>
<rect x="786.69" y="382.00" width="1.10" height="32.00" fill="#ababab" shape-rendering="auto"/>
<rect x="802.18" y="382.00" width="0.80" height="32.00" fill="#989898" shape-rendering="auto"/>
<rect x="805.25" y="382.00" width="0.80" height="32.00" fill="#989898" shape-rendering="auto"/>
<rect x="808.31" y="382.00" width="0.80" height="32.00" fill="#989898" shape-rendering="auto"/>
<rect x="798.96" y="382.00" width="1.10" height="32.00" fill="#ababab" shape-rendering="auto"/>
<rect x="814.45" y="382.00" width="0.80" height="32.00" fill="#989898" shape-rendering="auto"/>
<rect x="817.52" y="382.00" width="0.80" height="32.00" fill="#989898" shape-rendering="auto"/>
<rect x="820.59" y="382.00" width="0.80" height="32.00" fill="#989898" shape-rendering="auto"/>
<rect x="811.23" y="382.00" width="1.10" height="32.00" fill="#ababab" shape-rendering="auto"/>
<rect x="826.72" y="382.00" width="0.80" height="32.00" fill="#989898" shape-rendering="auto"/>
<rect x="829.79" y="382.00" width="0.80" height="32.00" fill="#989898" shape-rendering="auto"/>
<rect x="832.86" y="382.00" width="0.80" height="32.00" fill="#989898" shape-rendering="auto"/>
<rect x="823.51" y="382.00" width="1.10" height="32.00" fill="#ababab" shape-rendering="auto"/>
<rect x="839.00" y="382.00" width="0.80" height="32.00" fill="#989898" shape-rendering="auto"/>
<rect x="842.06" y="382.00" width="0.80" height="32.00" fill="#989898" shape-rendering="auto"/>
<rect x="845.13" y="382.00" width="0.80" height="32.00" fill="#989898" shape-rendering="auto"/>
<rect x="851.27" y="382.00" width="0.80" height="32.00" fill="#989898" shape-rendering="auto"/>
<rect x="854.34" y="382.00" width="0.80" height="32.00" fill="#989898" shape-rendering="auto"/>
<rect x="857.40" y="382.00" width="0.80" height="32.00" fill="#989898" shape-rendering="auto"/>
<rect x="848.05" y="382.00" width="1.10" height="32.00" fill="#ababab" shape-rendering="auto"/>
<rect x="863.54" y="382.00" width="0.80" height="32.00" fill="#989898" shape-rendering="auto"/>
<rect x="866.61" y="382.00" width="0.80" height="32.00" fill="#989898" shape-rendering="auto"/>
<rect x="869.68" y="382.00" width="0.80" height="32.00" fill="#989898" shape-rendering="auto"/>
<rect x="875.81" y="382.00" width="0.80" height="32.00" fill="#989898" shape-rendering="auto"/>
<rect x="878.88" y="382.00" width="0.80" height="32.00" fill="#989898" shape-rendering="auto"/>
<rect x="881.95" y="382.00" width="0.80" height="32.00" fill="#989898" shape-rendering="auto"/>
<rect x="872.60" y="382.00" width="1.10" height="32.00" fill="#ababab" shape-rendering="auto"/>
<rect x="888.09" y="382.00" width="0.80" height="32.00" fill="#989898" shape-rendering="auto"/>
<rect x="891.15" y="382.00" width="0.80" height="32.00" fill="#989898" shape-rendering="auto"/>
<rect x="894.22" y="382.00" width="0.80" height="32.00" fill="#989898" shape-rendering="auto"/>
<rect x="900.36" y="382.00" width="0.80" height="32.00" fill="#989898" shape-rendering="auto"/>
<rect x="903.43" y="382.00" width="0.80" height="32.00" fill="#989898" shape-rendering="auto"/>
<rect x="906.49" y="382.00" width="0.80" height="32.00" fill="#989898" shape-rendering="auto"/>
<rect x="897.14" y="382.00" width="1.10" height="32.00" fill="#ababab" shape-rendering="auto"/>
<rect x="912.63" y="382.00" width="0.80" height="32.00" fill="#989898" shape-rendering="auto"/>
<rect x="915.70" y="382.00" width="0.80" height="32.00" fill="#989898" shape-rendering="auto"/>
<rect x="918.77" y="382.00" width="0.80" height="32.00" fill="#989898" shape-rendering="auto"/>
<rect x="924.90" y="382.00" width="0.80" height="32.00" fill="#989898" shape-rendering="auto"/>
<rect x="927.97" y="382.00" width="0.80" height="32.00" fill="#989898" shape-rendering="auto"/>
<rect x="931.04" y="382.00" width="0.80" height="32.00" fill="#989898" shape-rendering="auto"/>
<rect x="921.69" y="382.00" width="1.10" height="32.00" fill="#ababab" shape-rendering="auto"/>
<rect x="937.18" y="382.00" width="0.80" height="32.00" fill="#989898" shape-rendering="auto"/>
<rect x="940.24" y="382.00" width="0.80" height="32.00" fill="#989898" shape-rendering="auto"/>
<rect x="943.31" y="382.00" width="0.80" height="32.00" fill="#989898" shape-rendering="auto"/>
<rect x="949.45" y="382.00" width="0.80" height="32.00" fill="#989898" shape-rendering="auto"/>
<rect x="952.52" y="382.00" width="0.80" height="32.00" fill="#989898" shape-rendering="auto"/>
<rect x="955.58" y="382.00" width="0.80" height="32.00" fill="#989898" shape-rendering="auto"/>
<rect x="946.23" y="382.00" width="1.10" height="32.00" fill="#ababab" shape-rendering="auto"/>
<rect x="961.72" y="382.00" width="0.80" height="32.00" fill="#989898" shape-rendering="auto"/>
<rect x="964.79" y="382.00" width="0.80" height="32.00" fill="#989898" shape-rendering="auto"/>
<rect x="967.86" y="382.00" width="0.80" height="32.00" fill="#989898" shape-rendering="auto"/>
<rect x="973.99" y="382.00" width="0.80" height="32.00" fill="#989898" shape-rendering="auto"/>
<rect x="977.06" y="382.00" width="0.80" height="32.00" fill="#989898" shape-rendering="auto"/>
<rect x="980.13" y="382.00" width="0.80" height="32.00" fill="#989898" shape-rendering="auto"/>
<rect x="970.78" y="382.00" width="1.10" height="32.00" fill="#ababab" shape-rendering="auto"/>
<rect x="986.27" y="382.00" width="0.80" height="32.00" fill="#989898" shape-rendering="auto"/>
<rect x="989.33" y="382.00" width="0.80" height="32.00" fill="#989898" shape-rendering="auto"/>
<rect x="992.40" y="382.00" width="0.80" height="32.00" fill="#989898" shape-rendering="auto"/>
<rect x="998.54" y="382.00" width="0.80" height="32.00" fill="#989898" shape-rendering="auto"/>
<rect x="1001.61" y="382.00" width="0.80" height="32.00" fill="#989898" shape-rendering="auto"/>
<rect x="1004.67" y="382.00" width="0.80" height="32.00" fill="#989898" shape-rendering="auto"/>
<rect x="995.32" y="382.00" width="1.10" height="32.00" fill="#ababab" shape-rendering="auto"/>
<rect x="1010.81" y="382.00" width="0.80" height="32.00" fill="#989898" shape-rendering="auto"/>
<rect x="1013.88" y="382.00" width="0.80" height="32.00" fill="#989898" shape-rendering="auto"/>
<rect x="1016.95" y="382.00" width="0.80" height="32.00" fill="#989898" shape-rendering="auto"/>
<rect x="1023.08" y="382.00" width="0.80" height="32.00" fill="#989898" shape-rendering="auto"/>
<rect x="1026.15" y="382.00" width="0.80" height="32.00" fill="#989898" shape-rendering="auto"/>
<rect x="1029.22" y="382.00" width="0.80" height="32.00" fill="#989898" shape-rendering="auto"/>
<rect x="1019.87" y="382.00" width="1.10" height="32.00" fill="#ababab" shape-rendering="auto"/>
<rect x="1035.36" y="382.00" width="0.80" height="32.00" fill="#989898" shape-rendering="auto"/>
<rect x="1038.42" y="382.00" width="0.80" height="32.00" fill="#989898" shape-rendering="auto"/>
<rect x="1041.49" y="382.00" width="0.80" height="32.00" fill="#989898" shape-rendering="auto"/>
<rect x="1047.63" y="382.00" width="0.80" height="32.00" fill="#989898" shape-rendering="auto"/>
<rect x="1050.70" y="382.00" width="0.80" height="32.00" fill="#989898" shape-rendering="auto"/>
<rect x="1053.76" y="382.00" width="0.80" height="32.00" fill="#989898" shape-rendering="auto"/>
<rect x="1044.41" y="382.00" width="1.10" height="32.00" fill="#ababab" shape-rendering="auto"/>
<rect x="1059.90" y="382.00" width="0.80" height="32.00" fill="#989898" shape-rendering="auto"/>
<rect x="1062.97" y="382.00" width="0.80" height="32.00" fill="#989898" shape-rendering="auto"/>
<rect x="1066.04" y="382.00" width="0.80" height="32.00" fill="#989898" shape-rendering="auto"/>
<rect x="1072.17" y="382.00" width="0.80" height="32.00" fill="#989898" shape-rendering="auto"/>
<rect x="1075.24" y="382.00" width="0.80" height="32.00" fill="#989898" shape-rendering="auto"/>
<rect x="1078.31" y="382.00" width="0.80" height="32.00" fill="#989898" shape-rendering="auto"/>
<rect x="1068.96" y="382.00" width="1.10" height="32.00" fill="#ababab" shape-rendering="auto"/>
<rect x="1084.45" y="382.00" width="0.80" height="32.00" fill="#989898" shape-rendering="auto"/>
<rect x="1087.51" y="382.00" width="0.80" height="32.00" fill="#989898" shape-rendering="auto"/>
<rect x="1090.58" y="382.00" width="0.80" height="32.00" fill="#989898" shape-rendering="auto"/>
<rect x="1096.72" y="382.00" width="0.80" height="32.00" fill="#989898" shape-rendering="auto"/>
<rect x="1099.79" y="382.00" width="0.80" height="32.00" fill="#989898" shape-rendering="auto"/>
<rect x="1102.85" y="382.00" width="0.80" height="32.00" fill="#989898" shape-rendering="auto"/>
<rect x="1093.50" y="382.00" width="1.10" height="32.00" fill="#ababab" shape-rendering="auto"/>
<rect x="1108.99" y="382.00" width="0.80" height="32.00" fill="#989898" shape-rendering="auto"/>
<rect x="1112.06" y="382.00" width="0.80" height="32.00" fill="#989898" shape-rendering="auto"/>
<rect x="1115.13" y="382.00" width="0.80" height="32.00" fill="#989898" shape-rendering="auto"/>
<rect x="1121.26" y="382.00" width="0.80" height="32.00" fill="#989898" shape-rendering="auto"/>
<rect x="1124.33" y="382.00" width="0.80" height="32.00" fill="#989898" shape-rendering="auto"/>
<rect x="1127.40" y="382.00" width="0.80" height="32.00" fill="#989898" shape-rendering="auto"/>
<rect x="1118.05" y="382.00" width="1.10" height="32.00" fill="#ababab" shape-rendering="auto"/>
<rect x="1133.54" y="382.00" width="0.80" height="32.00" fill="#989898" shape-rendering="auto"/>
<rect x="1136.60" y="382.00" width="0.80" height="32.00" fill="#989898" shape-rendering="auto"/>
<rect x="1139.67" y="382.00" width="0.80" height="32.00" fill="#989898" shape-rendering="auto"/>
<rect x="1145.81" y="382.00" width="0.80" height="32.00" fill="#989898" shape-rendering="auto"/>
<rect x="1148.88" y="382.00" width="0.80" height="32.00" fill="#989898" shape-rendering="auto"/>
<rect x="1151.94" y="382.00" width="0.80" height="32.00" fill="#989898" shape-rendering="auto"/>
<rect x="1142.59" y="382.00" width="1.10" height="32.00" fill="#ababab" shape-rendering="auto"/>
<rect x="1158.08" y="382.00" width="0.80" height="32.00" fill="#989898" shape-rendering="auto"/>
<rect x="1161.15" y="382.00" width="0.80" height="32.00" fill="#989898" shape-rendering="auto"/>
<rect x="1164.22" y="382.00" width="0.80" height="32.00" fill="#989898" shape-rendering="auto"/>
<rect x="1170.35" y="382.00" width="0.80" height="32.00" fill="#989898" shape-rendering="auto"/>
<rect x="1173.42" y="382.00" width="0.80" height="32.00" fill="#989898" shape-rendering="auto"/>
<rect x="1176.49" y="382.00" width="0.80" height="32.00" fill="#989898" shape-rendering="auto"/>
<rect x="1167.14" y="382.00" width="1.10" height="32.00" fill="#ababab" shape-rendering="auto"/>
<rect x="1182.63" y="382.00" width="0.80" height="32.00" fill="#989898" shape-rendering="auto"/>
<rect x="1185.69" y="382.00" width="0.80" height="32.00" fill="#989898" shape-rendering="auto"/>
<rect x="1188.76" y="382.00" width="0.80" height="32.00" fill="#989898" shape-rendering="auto"/>
<rect x="1194.90" y="382.00" width="0.80" height="32.00" fill="#989898" shape-rendering="auto"/>
<rect x="1197.97" y="382.00" width="0.80" height="32.00" fill="#989898" shape-rendering="auto"/>
<rect x="1201.03" y="382.00" width="0.80" height="32.00" fill="#989898" shape-rendering="auto"/>
<rect x="1191.68" y="382.00" width="1.10" height="32.00" fill="#ababab" shape-rendering="auto"/>
<rect x="1207.17" y="382.00" width="0.80" height="32.00" fill="#989898" shape-rendering="auto"/>
<rect x="1210.24" y="382.00" width="0.80" height="32.00" fill="#989898" shape-rendering="auto"/>
<rect x="1213.31" y="382.00" width="0.80" height="32.00" fill="#989898" shape-rendering="auto"/>
<rect x="1219.44" y="382.00" width="0.80" height="32.00" fill="#989898" shape-rendering="auto"/>
<rect x="1222.51" y="382.00" width="0.80" height="32.00" fill="#989898" shape-rendering="auto"/>
<rect x="1225.58" y="382.00" width="0.80" height="32.00" fill="#989898" shape-rendering="auto"/>
<rect x="1216.23" y="382.00" width="1.10" height="32.00" fill="#ababab" shape-rendering="auto"/>
<rect x="1231.72" y="382.00" width="0.80" height="32.00" fill="#989898" shape-rendering="auto"/>
<rect x="1234.78" y="382.00" width="0.80" height="32.00" fill="#989898" shape-rendering="auto"/>
<rect x="1237.85" y="382.00" width="0.80" height="32.00" fill="#989898" shape-rendering="auto"/>
<rect x="1243.99" y="382.00" width="0.80" height="32.00" fill="#989898" shape-rendering="auto"/>
<rect x="1247.06" y="382.00" width="0.80" height="32.00" fill="#989898" shape-rendering="auto"/>
<rect x="1250.12" y="382.00" width="0.80" height="32.00" fill="#989898" shape-rendering="auto"/>
<rect x="1240.77" y="382.00" width="1.10" height="32.00" fill="#ababab" shape-rendering="auto"/>
<rect x="1256.26" y="382.00" width="0.80" height="32.00" fill="#989898" shape-rendering="auto"/>
<rect x="1259.33" y="382.00" width="0.80" height="32.00" fill="#989898" shape-rendering="auto"/>
<rect x="1262.40" y="382.00" width="0.80" height="32.00" fill="#989898" shape-rendering="auto"/>
<rect x="1268.53" y="382.00" width="0.80" height="32.00" fill="#989898" shape-rendering="auto"/>
<rect x="1265.32" y="382.00" width="1.10" height="32.00" fill="#ababab" shape-rendering="auto"/>
<rect x="136.30" y="382.00" width="1.20" height="32.00" fill="#c6c6c6" shape-rendering="auto"/>
<rect x="161.10" y="382.00" width="1.20" height="32.00" fill="#c6c6c6" shape-rendering="auto"/>
<rect x="283.30" y="382.00" width="1.20" height="32.00" fill="#c6c6c6" shape-rendering="auto"/>
<rect x="185.55" y="382.00" width="1.50" height="32.00" fill="#e0e0e0" shape-rendering="auto"/>
<rect x="210.15" y="382.00" width="1.50" height="32.00" fill="#e0e0e0" shape-rendering="auto"/>
<rect x="234.65" y="382.00" width="1.50" height="32.00" fill="#e0e0e0" shape-rendering="auto"/>
<rect x="308.15" y="382.00" width="1.50" height="32.00" fill="#e0e0e0" shape-rendering="auto"/>
<rect x="638.55" y="382.00" width="1.50" height="32.00" fill="#e0e0e0" shape-rendering="auto"/>
<rect x="834.85" y="382.00" width="1.50" height="32.00" fill="#e0e0e0" shape-rendering="auto"/>
<rect x="859.39" y="382.00" width="1.50" height="32.00" fill="#e0e0e0" shape-rendering="auto"/>
<rect x="883.94" y="382.00" width="1.50" height="32.00" fill="#e0e0e0" shape-rendering="auto"/>
<rect x="908.49" y="382.00" width="1.50" height="32.00" fill="#e0e0e0" shape-rendering="auto"/>
<rect x="933.03" y="382.00" width="1.50" height="32.00" fill="#e0e0e0" shape-rendering="auto"/>
<rect x="957.58" y="382.00" width="1.50" height="32.00" fill="#e0e0e0" shape-rendering="auto"/>
<rect x="982.12" y="382.00" width="1.50" height="32.00" fill="#e0e0e0" shape-rendering="auto"/>
<rect x="1006.66" y="382.00" width="1.50" height="32.00" fill="#e0e0e0" shape-rendering="auto"/>
<rect x="1031.21" y="382.00" width="1.50" height="32.00" fill="#e0e0e0" shape-rendering="auto"/>
<rect x="1055.76" y="382.00" width="1.50" height="32.00" fill="#e0e0e0" shape-rendering="auto"/>
<rect x="1080.30" y="382.00" width="1.50" height="32.00" fill="#e0e0e0" shape-rendering="auto"/>
<rect x="1104.85" y="382.00" width="1.50" height="32.00" fill="#e0e0e0" shape-rendering="auto"/>
<rect x="1129.39" y="382.00" width="1.50" height="32.00" fill="#e0e0e0" shape-rendering="auto"/>
<rect x="1153.93" y="382.00" width="1.50" height="32.00" fill="#e0e0e0" shape-rendering="auto"/>
<rect x="1178.48" y="382.00" width="1.50" height="32.00" fill="#e0e0e0" shape-rendering="auto"/>
<rect x="1203.03" y="382.00" width="1.50" height="32.00" fill="#e0e0e0" shape-rendering="auto"/>
<rect x="1227.57" y="382.00" width="1.50" height="32.00" fill="#e0e0e0" shape-rendering="auto"/>
<rect x="1252.12" y="382.00" width="1.50" height="32.00" fill="#e0e0e0" shape-rendering="auto"/>
<line x1="104.00" y1="381.50" x2="1271.00" y2="381.50" stroke="#2bb02b" stroke-width="1"/>
<line x1="104.00" y1="413.50" x2="1271.00" y2="413.50" stroke="#c22323" stroke-width="1"/>
<rect x="185.70" y="413.00" width="1.20" height="1.00" fill="#e6cfcf" shape-rendering="auto"/>
<rect x="210.30" y="413.00" width="1.20" height="1.00" fill="#e6cfcf" shape-rendering="auto"/>
<rect x="234.80" y="413.00" width="1.20" height="1.00" fill="#e6cfcf" shape-rendering="auto"/>
<rect x="308.30" y="413.00" width="1.20" height="1.00" fill="#e6cfcf" shape-rendering="auto"/>
<rect x="638.70" y="413.00" width="1.20" height="1.00" fill="#e6cfcf" shape-rendering="auto"/>
<rect x="835.00" y="413.00" width="1.20" height="1.00" fill="#e6cfcf" shape-rendering="auto"/>
<rect x="859.54" y="413.00" width="1.20" height="1.00" fill="#e6cfcf" shape-rendering="auto"/>
<rect x="884.09" y="413.00" width="1.20" height="1.00" fill="#e6cfcf" shape-rendering="auto"/>
<rect x="908.63" y="413.00" width="1.20" height="1.00" fill="#e6cfcf" shape-rendering="auto"/>
<rect x="933.18" y="413.00" width="1.20" height="1.00" fill="#e6cfcf" shape-rendering="auto"/>
<rect x="957.73" y="413.00" width="1.20" height="1.00" fill="#e6cfcf" shape-rendering="auto"/>
<rect x="982.27" y="413.00" width="1.20" height="1.00" fill="#e6cfcf" shape-rendering="auto"/>
<rect x="1006.81" y="413.00" width="1.20" height="1.00" fill="#e6cfcf" shape-rendering="auto"/>
<rect x="1031.36" y="413.00" width="1.20" height="1.00" fill="#e6cfcf" shape-rendering="auto"/>
<rect x="1055.91" y="413.00" width="1.20" height="1.00" fill="#e6cfcf" shape-rendering="auto"/>
<rect x="1080.45" y="413.00" width="1.20" height="1.00" fill="#e6cfcf" shape-rendering="auto"/>
<rect x="1105.00" y="413.00" width="1.20" height="1.00" fill="#e6cfcf" shape-rendering="auto"/>
<rect x="1129.54" y="413.00" width="1.20" height="1.00" fill="#e6cfcf" shape-rendering="auto"/>
<rect x="1154.09" y="413.00" width="1.20" height="1.00" fill="#e6cfcf" shape-rendering="auto"/>
<rect x="1178.63" y="413.00" width="1.20" height="1.00" fill="#e6cfcf" shape-rendering="auto"/>
<rect x="1203.18" y="413.00" width="1.20" height="1.00" fill="#e6cfcf" shape-rendering="auto"/>
<rect x="1227.72" y="413.00" width="1.20" height="1.00" fill="#e6cfcf" shape-rendering="auto"/>
<rect x="1252.27" y="413.00" width="1.20" height="1.00" fill="#e6cfcf" shape-rendering="auto"/>
<line x1="104.00" y1="460.50" x2="260.00" y2="460.50" stroke="#c22323" stroke-width="1"/>
<rect x="260.00" y="428.50" width="522.60" height="32.00" fill="#d2ccd9" />
<line x1="260.00" y1="428.50" x2="782.60" y2="428.50" stroke="#2bb02b" stroke-width="1"/>
<rect x="782.00" y="428.50" width="1.20" height="32.00" fill="#949494" shape-rendering="auto"/>
<line x1="782.60" y1="460.50" x2="1018.00" y2="460.50" stroke="#c22323" stroke-width="1"/>
<rect x="1018.00" y="428.50" width="253.00" height="32.00" fill="#f1e1e0" />
<line x1="1018.00" y1="428.50" x2="1271.00" y2="428.50" stroke="#2bb02b" stroke-width="1"/>
<rect x="104.00" y="475.50" width="156.00" height="32.00" fill="#f1e8df" />
<rect x="260.00" y="475.50" width="758.00" height="32.00" fill="#d3d3d4" />
<rect x="1018.00" y="475.50" width="253.00" height="32.00" fill="#f1e8df" />
<line x1="104.00" y1="475.50" x2="1271.00" y2="475.50" stroke="#2bb02b" stroke-width="1"/>
<rect x="260.00" y="143.00" width="1.00" height="535.00" fill="#3a4a62" />
<rect x="1017.00" y="139.00" width="1.00" height="539.00" fill="#3a4a62" />
</g>
<!-- ruler -->
<g>
<text x="131.93" y="126.3" font-size="12.5" fill="#2a2a2a" font-weight="normal" text-anchor="start" textLength="53.2" lengthAdjust="spacingAndGlyphs" stroke="#2a2a2a" stroke-width="0.3" >+12450 µs</text>
<text x="254.52" y="126.3" font-size="12.5" fill="#2a2a2a" font-weight="normal" text-anchor="start" textLength="53.2" lengthAdjust="spacingAndGlyphs" stroke="#2a2a2a" stroke-width="0.3" >+12460 µs</text>
<text x="377.11" y="126.3" font-size="12.5" fill="#2a2a2a" font-weight="normal" text-anchor="start" textLength="53.2" lengthAdjust="spacingAndGlyphs" stroke="#2a2a2a" stroke-width="0.3" >+12470 µs</text>
<text x="499.7" y="126.3" font-size="12.5" fill="#2a2a2a" font-weight="normal" text-anchor="start" textLength="53.2" lengthAdjust="spacingAndGlyphs" stroke="#2a2a2a" stroke-width="0.3" >+12480 µs</text>
<text x="622.29" y="126.3" font-size="12.5" fill="#2a2a2a" font-weight="normal" text-anchor="start" textLength="53.2" lengthAdjust="spacingAndGlyphs" stroke="#2a2a2a" stroke-width="0.3" >+12490 µs</text>
<text x="744.88" y="126.3" font-size="12.5" fill="#2a2a2a" font-weight="normal" text-anchor="start" textLength="53.2" lengthAdjust="spacingAndGlyphs" stroke="#2a2a2a" stroke-width="0.3" >+12500 µs</text>
<text x="867.47" y="126.3" font-size="12.5" fill="#2a2a2a" font-weight="normal" text-anchor="start" textLength="53.2" lengthAdjust="spacingAndGlyphs" stroke="#2a2a2a" stroke-width="0.3" >+12510 µs</text>
<text x="990.06" y="126.3" font-size="12.5" fill="#2a2a2a" font-weight="normal" text-anchor="start" textLength="53.2" lengthAdjust="spacingAndGlyphs" stroke="#2a2a2a" stroke-width="0.3" >+12520 µs</text>
<text x="1112.65" y="126.3" font-size="12.5" fill="#2a2a2a" font-weight="normal" text-anchor="start" textLength="53.2" lengthAdjust="spacingAndGlyphs" stroke="#2a2a2a" stroke-width="0.3" >+12530 µs</text>
<text x="1230.75" y="126.3" font-size="12.5" fill="#2a2a2a" font-weight="normal" text-anchor="start" textLength="53.2" lengthAdjust="spacingAndGlyphs" stroke="#2a2a2a" stroke-width="0.3" >+12540 µs</text>
</g>
<g>
<rect x="108.84" y="136.5" width="1.1" height="6.5" fill="#1e1e1e"/>
<rect x="133.36" y="136.5" width="1.1" height="6.5" fill="#1e1e1e"/>
<rect x="157.88" y="131" width="1.1" height="12" fill="#1e1e1e"/>
<rect x="182.40" y="136.5" width="1.1" height="6.5" fill="#1e1e1e"/>
<rect x="206.92" y="136.5" width="1.1" height="6.5" fill="#1e1e1e"/>
<rect x="231.43" y="136.5" width="1.1" height="6.5" fill="#1e1e1e"/>
<rect x="255.95" y="136.5" width="1.1" height="6.5" fill="#1e1e1e"/>
<rect x="280.47" y="131" width="1.1" height="12" fill="#1e1e1e"/>
<rect x="304.99" y="136.5" width="1.1" height="6.5" fill="#1e1e1e"/>
<rect x="329.51" y="136.5" width="1.1" height="6.5" fill="#1e1e1e"/>
<rect x="354.02" y="136.5" width="1.1" height="6.5" fill="#1e1e1e"/>
<rect x="378.54" y="136.5" width="1.1" height="6.5" fill="#1e1e1e"/>
<rect x="403.06" y="131" width="1.1" height="12" fill="#1e1e1e"/>
<rect x="427.58" y="136.5" width="1.1" height="6.5" fill="#1e1e1e"/>
<rect x="452.10" y="136.5" width="1.1" height="6.5" fill="#1e1e1e"/>
<rect x="476.61" y="136.5" width="1.1" height="6.5" fill="#1e1e1e"/>
<rect x="501.13" y="136.5" width="1.1" height="6.5" fill="#1e1e1e"/>
<rect x="525.65" y="131" width="1.1" height="12" fill="#1e1e1e"/>
<rect x="550.17" y="136.5" width="1.1" height="6.5" fill="#1e1e1e"/>
<rect x="574.69" y="136.5" width="1.1" height="6.5" fill="#1e1e1e"/>
<rect x="599.20" y="136.5" width="1.1" height="6.5" fill="#1e1e1e"/>
<rect x="623.72" y="136.5" width="1.1" height="6.5" fill="#1e1e1e"/>
<rect x="648.24" y="131" width="1.1" height="12" fill="#1e1e1e"/>
<rect x="672.76" y="136.5" width="1.1" height="6.5" fill="#1e1e1e"/>
<rect x="697.28" y="136.5" width="1.1" height="6.5" fill="#1e1e1e"/>
<rect x="721.79" y="136.5" width="1.1" height="6.5" fill="#1e1e1e"/>
<rect x="746.31" y="136.5" width="1.1" height="6.5" fill="#1e1e1e"/>
<rect x="770.83" y="131" width="1.1" height="12" fill="#1e1e1e"/>
<rect x="795.35" y="136.5" width="1.1" height="6.5" fill="#1e1e1e"/>
<rect x="819.87" y="136.5" width="1.1" height="6.5" fill="#1e1e1e"/>
<rect x="844.38" y="136.5" width="1.1" height="6.5" fill="#1e1e1e"/>
<rect x="868.90" y="136.5" width="1.1" height="6.5" fill="#1e1e1e"/>
<rect x="893.42" y="131" width="1.1" height="12" fill="#1e1e1e"/>
<rect x="917.94" y="136.5" width="1.1" height="6.5" fill="#1e1e1e"/>
<rect x="942.46" y="136.5" width="1.1" height="6.5" fill="#1e1e1e"/>
<rect x="966.97" y="136.5" width="1.1" height="6.5" fill="#1e1e1e"/>
<rect x="991.49" y="136.5" width="1.1" height="6.5" fill="#1e1e1e"/>
<rect x="1016.01" y="131" width="1.1" height="12" fill="#1e1e1e"/>
<rect x="1040.53" y="136.5" width="1.1" height="6.5" fill="#1e1e1e"/>
<rect x="1065.05" y="136.5" width="1.1" height="6.5" fill="#1e1e1e"/>
<rect x="1089.56" y="136.5" width="1.1" height="6.5" fill="#1e1e1e"/>
<rect x="1114.08" y="136.5" width="1.1" height="6.5" fill="#1e1e1e"/>
<rect x="1138.60" y="131" width="1.1" height="12" fill="#1e1e1e"/>
<rect x="1163.12" y="136.5" width="1.1" height="6.5" fill="#1e1e1e"/>
<rect x="1187.64" y="136.5" width="1.1" height="6.5" fill="#1e1e1e"/>
<rect x="1212.15" y="136.5" width="1.1" height="6.5" fill="#1e1e1e"/>
<rect x="1236.67" y="136.5" width="1.1" height="6.5" fill="#1e1e1e"/>
<rect x="1261.19" y="131" width="1.1" height="12" fill="#1e1e1e"/>
</g>
<path d="M104 136.5 H108.6 V143 H106.8 V139.6 L104.4 142.4 L104 142 Z" fill="#111"/>
<!-- cursor pill & flags -->
<rect x="268" y="119.5" width="742" height="16" rx="8" fill="#3566a9"/>
<path d="M198 119.7 H261 V139 L257.5 135.7 H198 Z" fill="#3566a9"/>
<path d="M1017.5 119.7 H1081 V135.8 H1021 L1017.5 139 Z" fill="#3566a9"/>
<text x="550.5" y="132.5" font-size="12.5" fill="#d3dff0" font-weight="normal" text-anchor="start" textLength="177" lengthAdjust="spacingAndGlyphs" stroke="#d3dff0" stroke-width="0.12" >16.177957533 kHz / 61.812500 µs</text>
<text x="202.3" y="132.5" font-size="12.5" fill="#d3dff0" font-weight="normal" text-anchor="start" textLength="54" lengthAdjust="spacingAndGlyphs" stroke="#d3dff0" stroke-width="0.12" >+12458 µs</text>
<text x="1022.6" y="132.5" font-size="12.5" fill="#d3dff0" font-weight="normal" text-anchor="start" textLength="54" lengthAdjust="spacingAndGlyphs" stroke="#d3dff0" stroke-width="0.12" >+12520 µs</text>

<!-- title -->
<text x="570.6" y="19.8" font-size="13" fill="#d3d9e1" font-weight="bold" text-anchor="start" textLength="143" lengthAdjust="spacingAndGlyphs" stroke="#d3d9e1" stroke-width="0" >Session 1 - PulseView</text>
<text x="58.9" y="47.7" font-size="12.5" fill="#2e2e2e" font-weight="normal" text-anchor="start" textLength="19.8" lengthAdjust="spacingAndGlyphs" stroke="#2e2e2e" stroke-width="0.3" >Run</text>
<text x="142.5" y="47.7" font-size="12.5" fill="#2e2e2e" font-weight="normal" text-anchor="start" textLength="47.5" lengthAdjust="spacingAndGlyphs" stroke="#2e2e2e" stroke-width="0.3" >Session 1</text>
<text x="5.6" y="71.6" font-size="12.5" fill="#2e2e2e" font-weight="normal" text-anchor="start" textLength="48" lengthAdjust="spacingAndGlyphs" stroke="#2e2e2e" stroke-width="0.3" >Session 1</text>
<text x="332.5" y="98.7" font-size="12.5" fill="#2e2e2e" font-weight="normal" text-anchor="start" textLength="65" lengthAdjust="spacingAndGlyphs" stroke="#2e2e2e" stroke-width="0.3" >Saleae Logic</text>
<text x="518.1" y="98.7" font-size="12.5" fill="#2e2e2e" font-weight="normal" text-anchor="start" textLength="65.7" lengthAdjust="spacingAndGlyphs" stroke="#2e2e2e" stroke-width="0.3" >1 M samples</text>
<text x="627.4" y="98.7" font-size="12.5" fill="#2e2e2e" font-weight="normal" text-anchor="start" textLength="39" lengthAdjust="spacingAndGlyphs" stroke="#2e2e2e" stroke-width="0.3" >16 MHz</text>

<!-- signal labels -->
<path d="M34.3 358 H94 L102.5 366.6 L94 375.3 H34.3 Z" fill="#1b1b1b"/>
<path d="M42.5 405 H94 L102.5 413.6 L94 422.3 H42.5 Z" fill="#a65a0a" stroke="#7d4406" stroke-width="0.8"/>
<path d="M54 452 H94 L102.5 460.6 L94 469.3 H54 Z" fill="#d40d0d" stroke="#a00606" stroke-width="0.8"/>
<path d="M56.3 499 H94 L102.5 507.6 L94 516.3 H56.3 Z" fill="#f67a10" stroke="#bb5a08" stroke-width="0.8"/>
<text x="38.7" y="371" font-size="12.5" fill="#dcdcdc" font-weight="normal" text-anchor="start" textLength="50.7" lengthAdjust="spacingAndGlyphs" stroke="#dcdcdc" stroke-width="0.3" >pixel data</text>
<text x="47.4" y="418" font-size="12.5" fill="#f3e4d3" font-weight="normal" text-anchor="start" textLength="41.4" lengthAdjust="spacingAndGlyphs" stroke="#f3e4d3" stroke-width="0.3" >pixel clk</text>
<text x="58.3" y="465" font-size="12.5" fill="#fbe1e1" font-weight="normal" text-anchor="start" textLength="30.5" lengthAdjust="spacingAndGlyphs" stroke="#fbe1e1" stroke-width="0.3" >hSync</text>
<text x="60.9" y="512" font-size="12.5" fill="#1a1a1a" font-weight="normal" text-anchor="start" textLength="27.9" lengthAdjust="spacingAndGlyphs" stroke="#1a1a1a" stroke-width="0.3" >vSync</text>
<path d="M26.6 360.3 H19.2 Q17.8 360.3 17.8 361.7 V512.6 Q17.8 514 19.2 514 H26.6" fill="none" stroke="#565656" stroke-width="4.5"/>

<!-- scrollbars -->
<rect x="1271" y="143" width="9" height="535" fill="#e2e2e2"/>
<rect x="1271" y="143" width="1" height="535" fill="#c6c6c6"/>
<rect x="104" y="678" width="1176" height="9" fill="#e2e2e2"/>
<rect x="104" y="678" width="1176" height="1" fill="#c2c2c2"/>
<rect x="339" y="679" width="24" height="8" fill="#f7f7f7"/>
<rect x="1272" y="143" width="8" height="11" fill="#f5f5f5"/>
<rect x="1272" y="664" width="8" height="14" fill="#f5f5f5"/>
<rect x="104" y="679" width="12" height="8" fill="#f5f5f5"/>
<rect x="1259" y="679" width="12" height="8" fill="#f5f5f5"/>
<rect x="1271" y="678" width="9" height="9" fill="#f0f0f0"/>
<path d="M1272.5 152 L1275.8 148 L1279 152 Z" fill="#3c3c3c"/>
<path d="M1272.5 668.5 L1275.8 672.5 L1279 668.5 Z" fill="#3c3c3c"/>
<path d="M111 679.5 L107.5 683.5 L111 687.5 Z" fill="#3c3c3c"/>
<path d="M1262.5 679.5 L1266.3 683.5 L1262.5 687.5 Z" fill="#3c3c3c"/>

<defs>
<linearGradient id="gwin" x1="0" y1="0" x2="0" y2="1"><stop offset="0" stop-color="#fbfbfb"/><stop offset="1" stop-color="#e2e2e2"/></linearGradient>
<linearGradient id="gfold" x1="0" y1="0" x2="0" y2="1"><stop offset="0" stop-color="#86b0e4"/><stop offset="1" stop-color="#4d7fc4"/></linearGradient>
<radialGradient id="gsph" cx="0.4" cy="0.35" r="0.7"><stop offset="0" stop-color="#e8e8e8"/><stop offset="0.6" stop-color="#a8a8a8"/><stop offset="1" stop-color="#7e7e7e"/></radialGradient>
<radialGradient id="gyel" cx="0.5" cy="0.5" r="0.5"><stop offset="0" stop-color="#fbfb9a"/><stop offset="0.5" stop-color="#ecec3c"/><stop offset="1" stop-color="#e6e63a"/></radialGradient>
</defs>
<!-- app icon in titlebar -->
<g>
<rect x="10" y="18.8" width="8" height="5" fill="#d8d2b8"/>
<rect x="10.6" y="17.6" width="6.8" height="1.6" fill="#3a2a20"/>
<path d="M12.9 9 V18" stroke="#d2601a" stroke-width="1.5"/>
<path d="M14.5 9.5 V18" stroke="#b9b44a" stroke-width="1.3"/>
<path d="M11.6 10 V18" stroke="#7a3a1a" stroke-width="1"/>
<path d="M9.4 8 L10.6 17" stroke="#2d5a3a" stroke-width="1"/>
<path d="M18.2 12 L15.8 18" stroke="#5a4a8a" stroke-width="1.4"/>
</g>
<!-- window controls -->
<rect x="1225" y="14" width="8.3" height="2.2" fill="#eceff3"/>
<path d="M1250 11.2 H1255 V16.2 Z" fill="#eceff3"/>
<path d="M1247 14.3 V19.2 H1251.8 Z" fill="#eceff3"/>
<path d="M1269 11.8 L1275.6 18.6 M1275.6 11.8 L1269 18.6" stroke="#eceff3" stroke-width="2.1" fill="none"/>
<!-- main toolbar: new session (disabled) -->
<rect x="7" y="35.8" width="12.4" height="13" fill="#f3f3f3" stroke="#c6c6c6" stroke-width="1.1"/>
<rect x="15.6" y="35.3" width="4.2" height="3.6" fill="#f1f19a"/>
<!-- run sphere -->
<circle cx="48.7" cy="43.1" r="5.8" fill="url(#gsph)"/>
<!-- tools icon (main toolbar) -->
<g id="tools" transform="translate(110.6,35)">
<g transform="scale(0.7)">
<path d="M4.6 2.2 A3.4 3.4 0 1 0 8.2 7.2 L17.2 15.8 A1.7 1.7 0 0 0 19.6 13.4 L10.6 4.8 A3.4 3.4 0 0 0 7.8 0.6 L8.4 3 L6.4 4.6 L4.2 4 Z" fill="#f7f7f7" stroke="#909090" stroke-width="1"/>
<path d="M19.4 1.2 L18.2 0.4 L8.6 9.8 L10.4 11.6 Z" fill="#c4d0e2" stroke="#6882a8" stroke-width="0.9"/>
<path d="M9.6 9.4 L11.2 11 L3.6 19.2 A1.9 1.9 0 0 1 0.9 16.6 Z" fill="#6c92c8" stroke="#38588c" stroke-width="1.3"/>
</g></g>
<!-- tab close X -->
<path d="M199.3 39.3 L208.6 47.9 M208.3 39.3 L199.5 47.9" stroke="#1a1a1a" stroke-width="2.2" stroke-linecap="round"/>
<!-- dock buttons -->
<rect x="1258.5" y="62.5" width="10.2" height="10" rx="2.4" fill="#fafafa" stroke="#8a8a8a"/>
<rect x="1263" y="64.8" width="4" height="4" fill="none" stroke="#777" stroke-width="1"/>
<rect x="1260.8" y="67" width="4" height="4" fill="#f0f0f0" stroke="#777" stroke-width="1"/>
<rect x="1271.8" y="62.5" width="10.2" height="10" rx="2.4" fill="#fafafa" stroke="#8a8a8a"/>
<path d="M1274.2 64.6 L1280 70.4 M1280 64.6 L1274.2 70.4" stroke="#555" stroke-width="1.6"/>
<!-- toolbar grip -->
<g fill="#dcdcdc">
<rect x="6" y="86.5" width="1.2" height="1.2"/><rect x="9" y="86.5" width="1.2" height="1.2"/>
<rect x="6" y="89.4" width="1.2" height="1.2"/><rect x="9" y="89.4" width="1.2" height="1.2"/>
<rect x="6" y="92.3" width="1.2" height="1.2"/><rect x="9" y="92.3" width="1.2" height="1.2"/>
<rect x="6" y="95.2" width="1.2" height="1.2"/><rect x="9" y="95.2" width="1.2" height="1.2"/>
<rect x="6" y="98.1" width="1.2" height="1.2"/><rect x="9" y="98.1" width="1.2" height="1.2"/>
<rect x="6" y="101" width="1.2" height="1.2"/><rect x="9" y="101" width="1.2" height="1.2"/>
</g>
<!-- new view icon -->
<rect x="21.6" y="86.2" width="15.6" height="15.6" rx="1" fill="url(#gwin)" stroke="#c9c9c9"/>
<rect x="23" y="87.6" width="11" height="1.6" fill="#1f2f86"/>
<circle cx="35.3" cy="88" r="3.7" fill="url(#gyel)"/>
<!-- dropdown arrows -->
<g fill="#414141">
<path d="M46.3 92.4 H53.5 L49.9 96.2 Z"/>
<path d="M95.5 92.4 H102.7 L99.1 96.2 Z"/>
<path d="M138 92.4 H145.2 L141.6 96.2 Z"/>
<path d="M440.4 91.9 H447.6 L444 95.7 Z"/>
<path d="M607.2 92.4 H613.8 L610.5 96 Z"/>
<path d="M678.7 92.4 H685.3 L682 96 Z"/>
</g>
<!-- folder -->
<path d="M69.5 86.2 H76 V102.2 H69.5 Z" fill="#9aa0aa" stroke="#5d636d" stroke-width="1"/>
<path d="M76 84.3 H82.6 L86 87.6 V91 H76 Z" fill="#f0f0f0" stroke="#555" stroke-width="0.9"/>
<path d="M78 86 H82 V89.4 H78 Z" fill="#c9c9c9"/>
<path d="M70.6 90.6 H87.6 V102.4 H70.6 Z" fill="url(#gfold)" stroke="#3f679f" stroke-width="1"/>
<path d="M71.6 91.7 H86.6" stroke="#a9c8ee" stroke-width="0.9"/>
<!-- save -->
<path d="M113 89 H128 L131 97.5 H110 Z" fill="#f4f4f4" stroke="#6a6a6a" stroke-width="1"/>
<rect x="110.3" y="97.3" width="20.6" height="6.6" rx="1" fill="#e9e9e9" stroke="#4c4c4c" stroke-width="1.3"/>
<rect x="113" y="99.2" width="11" height="2.8" fill="#fff" stroke="#9a9a9a" stroke-width="0.6"/>
<rect x="124.6" y="98.6" width="1.6" height="4" fill="#222"/>
<path d="M113.6 87.4 C114.5 83.6 121.5 82.6 123.4 87.6 L123.8 90.4 H126.6 L121.7 96.8 L116.6 90.4 H119.6 C119.4 87.6 116.6 87 115.2 88.4 Z" fill="#3f8fce" stroke="#27608f" stroke-width="0.9"/>
<path d="M114.6 87.3 C115.6 85.6 117.6 85.4 118.6 86" stroke="#d8ecf8" stroke-width="1.1" fill="none"/>
<!-- zoom icons -->
<path d="M168.1 89.6 H171 V92.4 H173.9 V95.4 H171 V98.6 H168.1 V95.4 H165.2 V92.4 H168.1 Z" fill="#fff" stroke="#7c7c7c" stroke-width="0.9"/>
<rect x="196" y="92.4" width="9.2" height="3.2" fill="#fff" stroke="#7c7c7c" stroke-width="0.9"/>
<g fill="none" stroke="#7c7c7c" stroke-width="1.5">
<path d="M227.2 92.4 V89.7 H230"/><path d="M233.2 89.7 H236 V92.4"/><path d="M227.2 96.4 V99.2 H230"/><path d="M233.2 99.2 H236 V96.4"/>
</g>
<circle cx="231.6" cy="94.4" r="1.4" fill="#d0d0d0"/>
<!-- cursors icon -->
<path d="M258.8 86 H267 V102.2 H265 V90.6 H258.8 Z" fill="#2c59a6"/>
<path d="M272 86 H280.2 V90.6 H274 V102.2 H272 Z" fill="#2c59a6"/>
<!-- tools icon toolbar -->
<g transform="translate(455.6,84)">
<path d="M4.6 2.2 A3.4 3.4 0 1 0 8.2 7.2 L17.2 15.8 A1.7 1.7 0 0 0 19.6 13.4 L10.6 4.8 A3.4 3.4 0 0 0 7.8 0.6 L8.4 3 L6.4 4.6 L4.2 4 Z" fill="#f7f7f7" stroke="#8c8c8c" stroke-width="1"/>
<path d="M19.2 1.4 L18 0.6 L9.2 10 L10.8 11.6 Z" fill="#c4d0e2" stroke="#6882a8" stroke-width="0.9"/>
<path d="M9.8 9.6 L11.4 11.2 L3.8 19.4 A1.9 1.9 0 0 1 1.1 16.8 Z" fill="#6c92c8" stroke="#38588c" stroke-width="1.4"/>
<path d="M3.2 17 L9.4 10.8" stroke="#a9c2e6" stroke-width="0.9"/>
</g>
<!-- probe -->
<ellipse cx="497.5" cy="102.6" rx="6.5" ry="1.1" fill="#cfcfcf"/>
<path d="M502.4 84.4 L506 88.2 L499.8 94.6 L498.8 93.8 L488.6 102.6 L488 102 L496.6 91.8 L495.8 90.8 Z" fill="#cf0606"/>
<!-- decoder icon -->
<path d="M704.8 94.4 H725.6" stroke="#8aa02a" stroke-width="1"/>
<path d="M706.8 94.4 L708.4 89.6 H710.8 L712.6 94.4 L710.8 99.4 H708.4 Z" fill="#efcf0a"/>
<path d="M712.4 94.4 L714.6 89.2 H721 L723.4 94.4 L721 99.8 H714.6 Z" fill="#5dcb1d"/>
<!-- math icon -->
<path d="M740.5 87.5 V99.7 H752.5" fill="none" stroke="#2e2e2e" stroke-width="1.4"/>
<path d="M739 88.6 L740.5 85.8 L742 88.6 Z" fill="#111"/>
<path d="M751.6 98.2 L754.6 99.7 L751.6 101.2 Z" fill="#111"/>
<path d="M741.6 97.6 C743.6 93 745 91.4 746.6 93 C748.4 94.8 750.4 96 752.4 88" fill="none" stroke="#e59a9a" stroke-width="0.8"/>
<text x="742.4" y="90.6" font-size="5.2" fill="#333">f(x)</text>

</svg>
<div class="abs" id="leftedge"></div>
</body></html>
